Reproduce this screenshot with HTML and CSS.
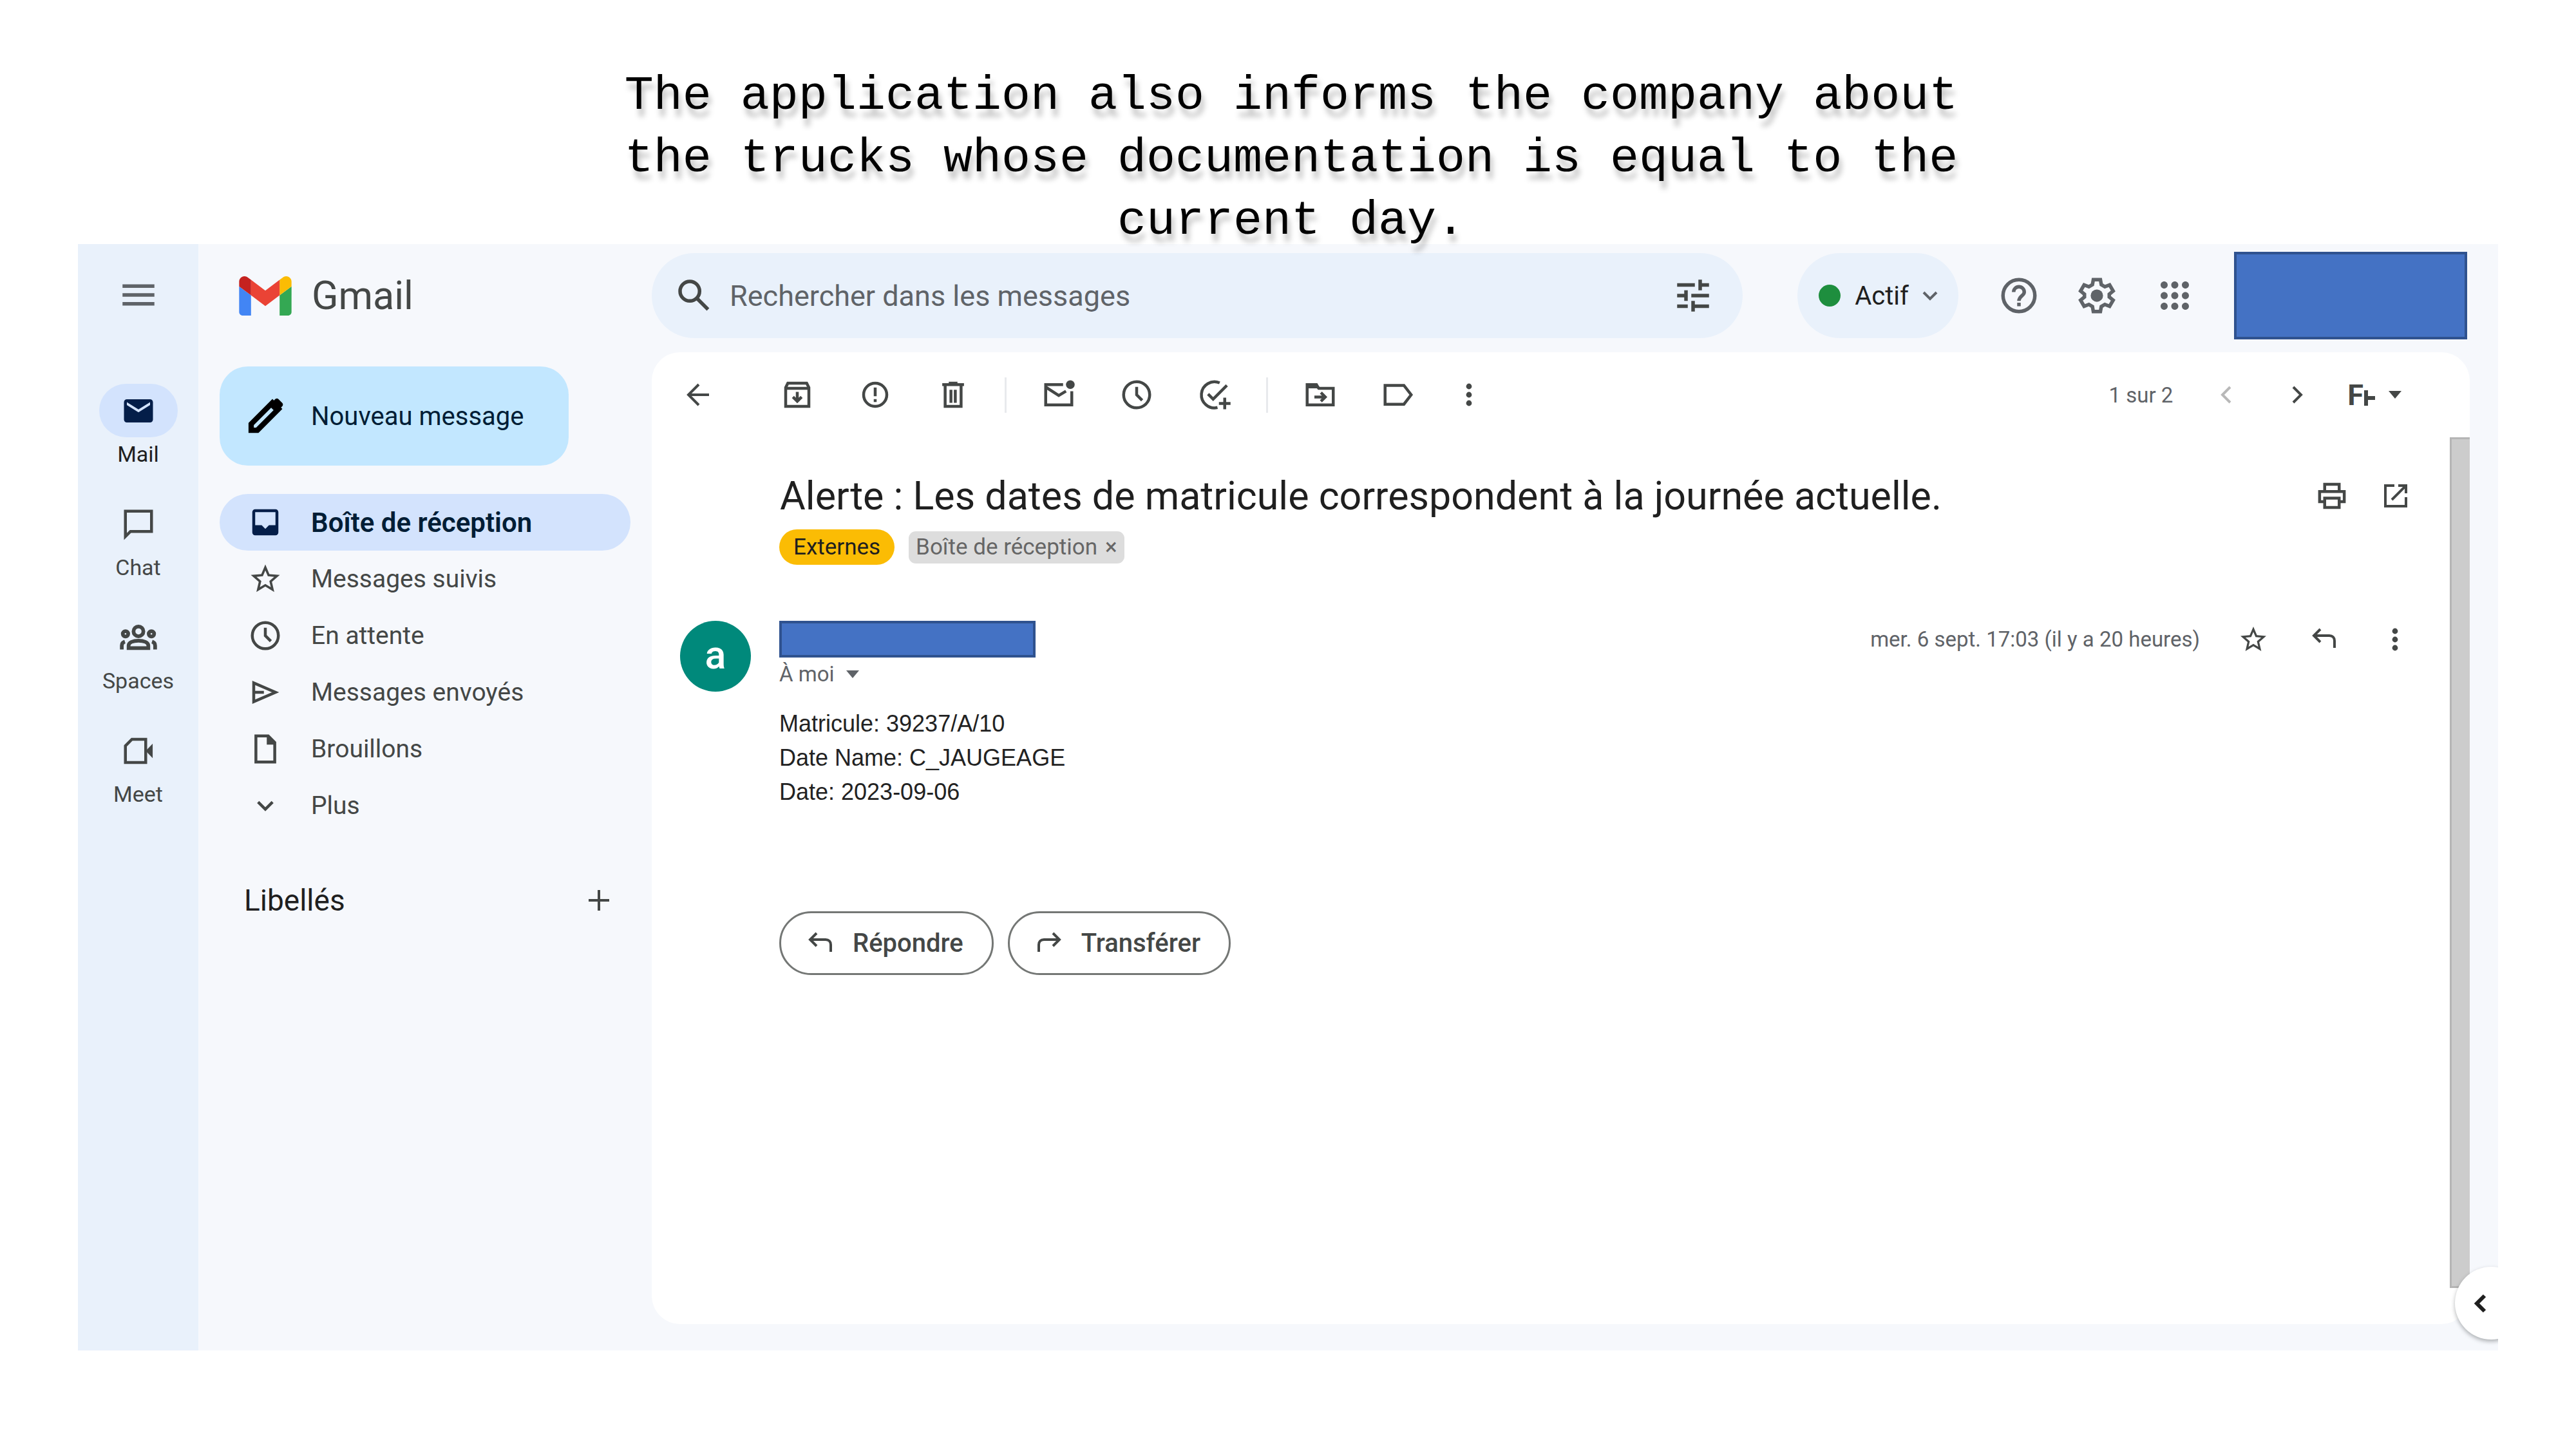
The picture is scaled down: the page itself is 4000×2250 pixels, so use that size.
FILE: index.html
```html
<!DOCTYPE html>
<html lang="fr">
<head>
<meta charset="utf-8">
<meta name="viewport" content="width=device-width, initial-scale=1">
<title>Gmail</title>
<link rel="stylesheet" href="styles.css">
</head>
<body>
<svg class="sprite" aria-hidden="true">
  <symbol id="menu" viewBox="0 0 24 24"><path class="f" d="M3 6h18v2H3zM3 11h18v2H3zM3 16h18v2H3z"/></symbol>
  <symbol id="mail" viewBox="0 0 24 24"><path class="f" d="M20 4H4c-1.100 0-2 .9-2 2v12c0 1.100.9 2 2 2h16c1.100 0 2-.9 2-2V6c0-1.100-.9-2-2-2zm0 4l-8 5-8-5V6l8 5 8-5v2z"/></symbol>
  <symbol id="chat" viewBox="0 0 24 24"><path d="M3 20.500V3h18v14H6.500z"/></symbol>
  <symbol id="spaces" viewBox="0 0 30 24"><g class="bold"><circle cx="15" cy="7" r="4"/><circle cx="4.500" cy="9" r="2.200"/><circle cx="25.500" cy="9" r="2.200"/><path d="M7 20.500v-2c0-2.600 3.600-4 8-4s8 1.400 8 4v2z"/><path d="M1.500 21.700v-3.200c0-1.600 1-2.700 2.500-3.200M28.500 21.700v-3.200c0-1.600-1-2.700-2.500-3.200"/></g></symbol>
  <symbol id="meet" viewBox="0 0 24 24"><path d="M7.500 4H17v16H3V8.500z"/><path class="f" d="M17 12l4.800-5v10z"/></symbol>
  <symbol id="pencil" viewBox="0 0 24 24"><path d="M4 20v-3.500L16 4.500l3.500 3.500L7.500 20z"/><path class="f" d="M14 6l3.500-3.500c.6-.6 1.500-.6 2 0l2 2c.6.500.6 1.400 0 2L18 10z"/></symbol>
  <symbol id="inbox" viewBox="0 0 24 24"><path class="f" fill-rule="evenodd" d="M5 3h14c1.100 0 2 .9 2 2v14c0 1.100-.9 2-2 2H5c-1.100 0-2-.9-2-2V5c0-1.100.9-2 2-2zm0 2v9h4.500l2.500 2.500 2.500-2.500H19V5z"/></symbol>
  <symbol id="star" viewBox="0 0 24 24"><path class="f" fill-rule="evenodd" d="M22 9.240l-7.190-.62L12 2 9.190 8.630 2 9.240l5.460 4.730L5.820 21 12 17.270 18.180 21l-1.630-7.030L22 9.240zM12 15.400l-3.760 2.270 1-4.280-3.320-2.880 4.380-.38L12 6.100l1.710 4.040 4.380.38-3.320 2.880 1 4.280L12 15.400z"/></symbol>
  <symbol id="clock" viewBox="0 0 24 24"><circle cx="12" cy="12" r="9"/><path d="M12 6.500V12l3.800 3.800"/></symbol>
  <symbol id="send" viewBox="0 0 24 24"><path d="M4 5.500v13L19 12z"/><path d="M4 12h7"/></symbol>
  <symbol id="draft" viewBox="0 0 24 24"><path d="M5.500 3H14l4.500 4.500V21h-13z"/><path class="f" d="M13 3l6 6h-6z"/></symbol>
  <symbol id="down" viewBox="0 0 24 24"><path d="M7 9.500l5 5 5-5"/></symbol>
  <symbol id="left" viewBox="0 0 24 24"><path d="M15 6l-6 6 6 6"/></symbol>
  <symbol id="right" viewBox="0 0 24 24"><path d="M9 6l6 6-6 6"/></symbol>
  <symbol id="plus" viewBox="0 0 24 24"><path d="M12 4v16M4 12h16"/></symbol>
  <symbol id="search" viewBox="0 0 24 24"><circle cx="9.500" cy="9.500" r="5.500"/><path d="M13.800 13.800l6 6"/></symbol>
  <symbol id="tune" viewBox="0 0 24 24"><path d="M3 6h10M16 3v6M16 6h5M3 12h5M8 9v6M11 12h10M3 18h6M12 15v6M12 18h9"/></symbol>
  <symbol id="help" viewBox="0 0 24 24"><circle cx="12" cy="12" r="9"/><path d="M9 10a3 3 0 1 1 6 0c0 2-3 2.400-3 5"/><path d="M12 16v2"/></symbol>
  <symbol id="gear" viewBox="0 0 24 24"><path d="M10 3h4l.5 2.800 2 1.200 2.700-1 2 3.400-2.200 1.800v1.600l2.200 1.800-2 3.400-2.700-1-2 1.200L14 21h-4l-.5-2.800-2-1.200-2.700 1-2-3.400L5 12.800v-1.600L2.800 9.400l2-3.400 2.700 1 2-1.200z"/><circle class="f" cx="12" cy="12" r="3.500"/></symbol>
  <symbol id="apps" viewBox="0 0 24 24"><path class="f" d="M6 8c1.100 0 2-.9 2-2s-.9-2-2-2-2 .9-2 2 .9 2 2 2zm6 12c1.100 0 2-.9 2-2s-.9-2-2-2-2 .9-2 2 .9 2 2 2zm-6 0c1.100 0 2-.9 2-2s-.9-2-2-2-2 .9-2 2 .9 2 2 2zm0-6c1.100 0 2-.9 2-2s-.9-2-2-2-2 .9-2 2 .9 2 2 2zm6 0c1.100 0 2-.9 2-2s-.9-2-2-2-2 .9-2 2 .9 2 2 2zm4-8c0 1.100.9 2 2 2s2-.9 2-2-.9-2-2-2-2 .9-2 2zm-4 2c1.100 0 2-.9 2-2s-.9-2-2-2-2 .9-2 2 .9 2 2 2zm6 6c1.100 0 2-.9 2-2s-.9-2-2-2-2 .9-2 2 .9 2 2 2zm0 6c1.100 0 2-.9 2-2s-.9-2-2-2-2 .9-2 2 .9 2 2 2z"/></symbol>
  <symbol id="back" viewBox="0 0 24 24"><path d="M20 12H5M12 4l-8 8 8 8"/></symbol>
  <symbol id="archive" viewBox="0 0 24 24"><path d="M4 7l1.500-3h13L20 7v13H4zM4 7.500h16M12 10v6M9 13.500l3 3 3-3"/></symbol>
  <symbol id="report" viewBox="0 0 24 24"><circle cx="12" cy="12" r="8"/><path d="M12 7v6M12 15v2"/></symbol>
  <symbol id="trash" viewBox="0 0 24 24"><path d="M6.500 6v14h11V6M4.500 5h15M9 4h6M10.500 8.500v9M13.500 8.500v9"/></symbol>
  <symbol id="unread" viewBox="0 0 24 24"><path d="M15 5H3v14h18V9.500M3.500 7l8.500 5.500 5-3"/><circle class="f" cx="20" cy="5" r="3"/></symbol>
  <symbol id="task" viewBox="0 0 24 24"><path d="M15.500 3.800A9 9 0 1 0 14 20.800M7.500 11.500l3.500 3.500L20.500 5.500M19 14v8M15 18h8"/></symbol>
  <symbol id="move" viewBox="0 0 24 24"><path d="M3 19V5h6l2 2.500h10V19z"/><path class="f" d="M3 4h7l2 3.500H3z"/><path d="M8 13.500h7M12.500 10.500l3 3-3 3"/></symbol>
  <symbol id="label" viewBox="0 0 24 24"><path d="M3 5.500h13L21 12l-5 6.500H3z"/></symbol>
  <symbol id="dots" viewBox="0 0 24 24"><circle class="f" cx="12" cy="5.500" r="2.200"/><circle class="f" cx="12" cy="12" r="2.200"/><circle class="f" cx="12" cy="18.500" r="2.200"/></symbol>
  <symbol id="print" viewBox="0 0 24 24"><path d="M7 8V4h10v4M7 16H3.500V9h17v7H17M7 13.500h10V20H7z"/></symbol>
  <symbol id="open" viewBox="0 0 24 24"><path d="M11 4H4v16h16v-7M14 4h6v6M20 4L9 15"/></symbol>
  <symbol id="reply" viewBox="0 0 24 24"><path d="M9 4L4 9l5 5M4 9h12c2.500 0 4 1.500 4 4v5.500"/></symbol>
  <symbol id="forward" viewBox="0 0 24 24"><path d="M15 4l5 5-5 5M20 9H8c-2.500 0-4 1.500-4 4v5.500"/></symbol>
  <symbol id="caret" viewBox="0 0 20 12"><path class="f" d="M0 0h20L10 12z"/></symbol>
  <symbol id="arm" viewBox="0 0 20 24"><path class="thick" d="M4 0v24M4 12h14"/></symbol>
</svg>

<h1 class="caption">The application also informs the company about the trucks whose documentation is equal to the current day.</h1>

<div class="app">
  <nav class="rail" aria-label="Applications">
    <button class="icon-btn menu" aria-label="Menu principal"><svg class="lg"><use href="#menu"/></svg></button>
    <a class="rail-item active" href="#"><span class="pill"><svg class="md"><use href="#mail"/></svg></span>Mail</a>
    <a class="rail-item" href="#"><span class="pill"><svg class="md"><use href="#chat"/></svg></span>Chat</a>
    <a class="rail-item" href="#"><span class="pill"><svg class="wide"><use href="#spaces"/></svg></span>Spaces</a>
    <a class="rail-item" href="#"><span class="pill"><svg class="md"><use href="#meet"/></svg></span>Meet</a>
  </nav>

  <div class="workspace">
    <header class="topbar">
      <a class="brand" href="#">
        <svg class="logo" viewBox="52 42 88 66" aria-hidden="true"><path fill="#4285f4" d="M58 108h14V74L52 59v43c0 3.320 2.690 6 6 6"/><path fill="#34a853" d="M120 108h14c3.320 0 6-2.690 6-6V59l-20 15"/><path fill="#fbbc04" d="M120 48v26l20-15v-8c0-7.420-8.470-11.650-14.400-7.200"/><path fill="#ea4335" d="M72 74V48l24 18 24-18v26L96 92"/><path fill="#c5221f" d="M52 51v8l20 15V48l-5.600-4.200c-5.940-4.450-14.400-.22-14.400 7.200"/></svg>
        Gmail
      </a>
      <form class="search" role="search">
        <button class="icon-btn" type="button" aria-label="Rechercher"><svg class="lg"><use href="#search"/></svg></button>
        <input type="search" placeholder="Rechercher dans les messages" aria-label="Rechercher dans les messages">
        <button class="icon-btn" type="button" aria-label="Options de recherche"><svg class="lg"><use href="#tune"/></svg></button>
      </form>
      <div class="account">
        <button class="status"><span class="dot"></span>Actif<svg class="xs"><use href="#down"/></svg></button>
        <button class="icon-btn tool" aria-label="Assistance"><svg class="lg"><use href="#help"/></svg></button>
        <button class="icon-btn tool" aria-label="Paramètres"><svg class="lg"><use href="#gear"/></svg></button>
        <button class="icon-btn tool" aria-label="Applications Google"><svg class="lg"><use href="#apps"/></svg></button>
        <div class="mask mask-account"></div>
      </div>
    </header>

    <div class="columns">
      <aside class="sidebar">
        <button class="compose"><svg class="lg"><use href="#pencil"/></svg>Nouveau message</button>
        <nav class="folders" aria-label="Dossiers">
          <a class="folder current" href="#"><svg class="md"><use href="#inbox"/></svg>Boîte de réception</a>
          <a class="folder" href="#"><svg class="md"><use href="#star"/></svg>Messages suivis</a>
          <a class="folder" href="#"><svg class="md"><use href="#clock"/></svg>En attente</a>
          <a class="folder" href="#"><svg class="md"><use href="#send"/></svg>Messages envoyés</a>
          <a class="folder" href="#"><svg class="md"><use href="#draft"/></svg>Brouillons</a>
          <a class="folder" href="#"><svg class="md"><use href="#down"/></svg>Plus</a>
        </nav>
        <div class="labels">
          <h2>Libellés</h2>
          <button class="icon-btn" aria-label="Créer un libellé"><svg class="sm"><use href="#plus"/></svg></button>
        </div>
      </aside>

      <main class="card">
        <div class="toolbar">
          <button class="icon-btn tool back" aria-label="Retour"><svg class="sm"><use href="#back"/></svg></button>
          <button class="icon-btn tool" aria-label="Archiver"><svg class="md"><use href="#archive"/></svg></button>
          <button class="icon-btn tool" aria-label="Signaler comme spam"><svg class="md"><use href="#report"/></svg></button>
          <button class="icon-btn tool" aria-label="Supprimer"><svg class="md"><use href="#trash"/></svg></button>
          <span class="divider"></span>
          <button class="icon-btn tool" aria-label="Marquer comme non lu"><svg class="md"><use href="#unread"/></svg></button>
          <button class="icon-btn tool" aria-label="Mettre en attente"><svg class="md"><use href="#clock"/></svg></button>
          <button class="icon-btn tool" aria-label="Ajouter à Tasks"><svg class="md"><use href="#task"/></svg></button>
          <span class="divider"></span>
          <button class="icon-btn tool" aria-label="Déplacer vers"><svg class="md"><use href="#move"/></svg></button>
          <button class="icon-btn tool" aria-label="Ajouter un libellé"><svg class="md"><use href="#label"/></svg></button>
          <button class="icon-btn compact" aria-label="Plus d'options"><svg class="sm"><use href="#dots"/></svg></button>
          <span class="pager">1 sur 2</span>
          <button class="icon-btn action" aria-label="Plus récent" disabled><svg class="sm"><use href="#left"/></svg></button>
          <button class="icon-btn action" aria-label="Plus ancien"><svg class="sm"><use href="#right"/></svg></button>
          <button class="input-tool" aria-label="Outils de saisie"><span>F</span><svg class="arm"><use href="#arm"/></svg><svg class="caret"><use href="#caret"/></svg></button>
        </div>

        <div class="reader">
          <article class="thread">
            <div class="subject">
              <h2>Alerte : Les dates de matricule correspondent à la journée actuelle.</h2>
              <div class="subject-actions">
                <button class="icon-btn compact" aria-label="Tout imprimer"><svg class="md"><use href="#print"/></svg></button>
                <button class="icon-btn compact" aria-label="Nouvelle fenêtre"><svg class="sm"><use href="#open"/></svg></button>
              </div>
            </div>
            <div class="chips">
              <span class="chip external">Externes</span>
              <span class="chip inbox">Boîte de réception <button aria-label="Retirer le libellé">×</button></span>
            </div>
            <div class="message">
              <div class="avatar">a</div>
              <div class="message-main">
                <div class="message-head">
                  <div class="mask mask-sender"></div>
                  <div class="meta">
                    <time datetime="2023-09-06T17:03">mer. 6 sept. 17:03 (il y a 20 heures)</time>
                    <button class="icon-btn action" aria-label="Suivre"><svg class="sm"><use href="#star"/></svg></button>
                    <button class="icon-btn action" aria-label="Répondre"><svg class="sm"><use href="#reply"/></svg></button>
                    <button class="icon-btn action" aria-label="Plus"><svg class="sm"><use href="#dots"/></svg></button>
                  </div>
                </div>
                <button class="recipient">À moi<svg class="caret"><use href="#caret"/></svg></button>
                <div class="body">
                  <p>Matricule: 39237/A/10</p>
                  <p>Date Name: C_JAUGEAGE</p>
                  <p>Date: 2023-09-06</p>
                </div>
                <div class="replies">
                  <button class="outlined"><svg class="sm"><use href="#reply"/></svg>Répondre</button>
                  <button class="outlined"><svg class="sm"><use href="#forward"/></svg>Transférer</button>
                </div>
              </div>
            </div>
          </article>
          <div class="scrollbar"></div>
        </div>
      </main>
    </div>
  </div>
  <button class="panel-toggle" aria-label="Afficher le panneau latéral"><svg class="sm"><use href="#left"/></svg></button>
</div>
</body>
</html>
```
FILE: styles.css
```css
* {
  box-sizing: border-box;
}

body {
  margin: 0;
  min-height: 100vh;
  padding: 101px 121px 153px;
  display: flex;
  flex-direction: column;
  background: #fff;
  color: #444746;
  font-family: Roboto, "Liberation Sans", sans-serif;
  font-size: 39px;
}

h1, h2, p {
  margin: 0;
  font-weight: 400;
}

a {
  color: inherit;
  text-decoration: none;
}

button {
  margin: 0;
  padding: 0;
  border: 0;
  background: none;
  color: inherit;
  font: inherit;
}

.sprite {
  position: absolute;
  width: 0;
  height: 0;
}

svg {
  flex: none;
  display: block;
  fill: none;
  stroke: currentColor;
  stroke-width: 2;
}

.f {
  fill: currentColor;
  stroke: none;
}

.bold {
  stroke-width: 3;
}

.thick {
  stroke-width: 6;
}

.lg { width: 66px; height: 66px; }
.md { width: 54px; height: 54px; }
.sm { width: 48px; height: 48px; }
.xs { width: 48px; height: 48px; margin: 0 -13px; }
.wide { width: 58px; height: 46px; }
.caret { width: 20px; height: 12px; }

/* Caption over the window */

.caption {
  position: relative;
  z-index: 1;
  max-width: 2100px;
  margin: 0 auto -13px;
  padding-left: 10px;
  color: #000;
  font-family: "Courier New", "Liberation Mono", monospace;
  font-size: 75px;
  line-height: 97px;
  text-align: center;
  text-shadow: 4px 12px 8px rgba(0, 0, 0, 0.25);
}

/* Window */

.app {
  position: relative;
  flex: 1;
  display: flex;
  overflow: hidden;
  background: #f6f8fc;
}

.icon-btn {
  display: flex;
  align-items: center;
  justify-content: center;
}

.tool { width: 121px; }
.action { width: 110px; }
.compact { width: 99px; }

.mask {
  background: #4472c4;
  border: 4px solid #2f528f;
}

/* Left rail */

.rail {
  flex: none;
  width: 187px;
  padding-top: 46px;
  display: flex;
  flex-direction: column;
  align-items: center;
  gap: 47px;
  background: #e9f1fb;
}

.menu {
  margin-bottom: 58px;
  color: #5f6368;
}

.rail-item {
  display: flex;
  flex-direction: column;
  align-items: center;
  gap: 6px;
  font-size: 34px;
  line-height: 40px;
}

.pill {
  width: 122px;
  height: 83px;
  display: flex;
  align-items: center;
  justify-content: center;
  border-radius: 44px;
}

.rail-item.active {
  color: #1f1f1f;
}

.active .pill {
  background: #d3e3fd;
  color: #041e49;
}

/* Top bar */

.workspace {
  flex: 1;
  min-width: 0;
  display: flex;
  flex-direction: column;
}

.topbar {
  padding: 14px 48px 22px 0;
  display: flex;
  align-items: stretch;
}

.brand {
  flex: none;
  width: 704px;
  padding-left: 63px;
  display: flex;
  align-items: center;
  gap: 31px;
  font-size: 61px;
}

.logo {
  width: 82px;
  height: 61px;
  stroke: none;
}

.search {
  flex: 1;
  max-width: 1694px;
  height: 132px;
  padding: 0 44px 0 33px;
  display: flex;
  align-items: center;
  gap: 22px;
  border-radius: 66px;
  background: #e9f1fb;
}

.search input {
  flex: 1;
  min-width: 0;
  padding: 0;
  border: 0;
  outline: 0;
  background: none;
  font: inherit;
  font-size: 45px;
}

.search input::placeholder {
  color: #5f6368;
  opacity: 1;
}

.account {
  flex: none;
  margin-left: auto;
  padding-left: 48px;
  display: flex;
  align-items: center;
  color: #5f6368;
}

.status {
  height: 132px;
  margin-right: 33px;
  padding: 0 33px;
  display: flex;
  align-items: center;
  gap: 22px;
  border-radius: 66px;
  background: #e9f1fb;
  color: #1f1f1f;
  font-size: 40px;
}

.status svg {
  color: #5f6368;
}

.dot {
  width: 34px;
  height: 34px;
  border-radius: 50%;
  background: #1e8e3e;
}

.mask-account {
  width: 362px;
  height: 136px;
  margin: -2px 0 -2px 32px;
}

/* Sidebar */

.columns {
  flex: 1;
  display: flex;
}

.sidebar {
  flex: none;
  width: 704px;
  padding: 22px 33px;
}

.compose {
  width: 542px;
  height: 154px;
  margin-bottom: 44px;
  padding-left: 38px;
  display: flex;
  align-items: center;
  gap: 38px;
  border-radius: 44px;
  background: #c2e7ff;
  color: #001d35;
  font-size: 40px;
}

.compose svg {
  color: #000;
  stroke-width: 3;
}

.folder {
  height: 88px;
  padding-left: 44px;
  display: flex;
  align-items: center;
  gap: 44px;
  border-radius: 44px;
}

.folder.current {
  background: #d3e3fd;
  color: #001d35;
  font-size: 42px;
  font-weight: 600;
}

.current svg {
  color: #041e49;
}

.labels {
  height: 88px;
  margin-top: 59px;
  padding: 0 25px 0 38px;
  display: flex;
  align-items: center;
  justify-content: space-between;
}

.labels h2 {
  color: #1f1f1f;
  font-size: 46px;
}

/* Message card */

.card {
  flex: 1;
  min-width: 0;
  margin: 0 44px 41px 0;
  display: flex;
  flex-direction: column;
  border-radius: 44px;
  background: #fff;
}

.toolbar {
  height: 132px;
  padding: 0 106px 0 12px;
  display: flex;
  align-items: center;
}

.back {
  margin-right: 32px;
}

.divider {
  width: 3px;
  height: 55px;
  margin: 0 20px;
  background: #e8eaed;
}

.pager {
  margin-left: auto;
  margin-right: 28px;
  color: #5f6368;
  font-size: 33px;
}

.icon-btn:disabled {
  color: #b8b8b8;
}

.input-tool {
  padding-left: 23px;
  display: flex;
  align-items: center;
  font-size: 45px;
  font-weight: 700;
}

.arm {
  width: 20px;
  height: 24px;
  margin: 10px 19px 0 0;
}

.reader {
  flex: 1;
  display: flex;
}

.thread {
  flex: 1;
  min-width: 0;
  padding: 55px 30px 56px 44px;
}

.subject {
  padding-left: 155px;
  display: flex;
  align-items: center;
  justify-content: space-between;
}

.subject h2 {
  color: #1f1f1f;
  font-size: 61px;
  line-height: 72px;
}

.subject-actions {
  padding-right: 5px;
  display: flex;
}

.chips {
  margin: 16px 0 87px;
  padding-left: 154px;
  display: flex;
  align-items: center;
  gap: 22px;
  font-size: 35px;
}

.chip {
  display: flex;
  align-items: center;
}

.chip.external {
  height: 55px;
  padding: 0 22px;
  border-radius: 28px;
  background: #fbbc04;
  color: #1f1f1f;
}

.chip.inbox {
  height: 50px;
  padding: 0 11px;
  gap: 12px;
  border-radius: 11px;
  background: #ddd;
  color: #666;
}

.message {
  display: flex;
  align-items: flex-start;
  gap: 44px;
}

.avatar {
  flex: none;
  width: 110px;
  height: 110px;
  border-radius: 50%;
  background: #00897b;
  color: #fff;
  font-size: 61px;
  font-weight: 500;
  line-height: 106px;
  text-align: center;
}

.message-main {
  flex: 1;
  min-width: 0;
}

.message-head {
  height: 57px;
  display: flex;
  align-items: center;
  justify-content: space-between;
}

.mask-sender {
  width: 398px;
  height: 57px;
}

.meta {
  display: flex;
  align-items: center;
  color: #444746;
}

.meta time {
  margin-right: 28px;
  color: #5f6368;
  font-size: 33px;
}

.recipient {
  margin-top: 6px;
  display: flex;
  align-items: center;
  gap: 18px;
  color: #5f6368;
  font-size: 33px;
  line-height: 40px;
}

.body {
  margin: 30px 0 159px;
  color: #222;
  font-family: Arial, "Liberation Sans", sans-serif;
  font-size: 36px;
  line-height: 53px;
}

.replies {
  display: flex;
  gap: 22px;
}

.outlined {
  height: 99px;
  padding: 0 44px 0 37px;
  display: flex;
  align-items: center;
  gap: 26px;
  border: 3px solid #747775;
  border-radius: 50px;
  font-size: 40px;
  font-weight: 500;
}

.scrollbar {
  flex: none;
  width: 31px;
  margin-bottom: 56px;
  border: 3px solid #b5b5b5;
  border-right: 0;
  background: #ccc;
}

/* Side panel toggle, cut off by the window's edge */

.panel-toggle {
  position: absolute;
  right: -46px;
  bottom: 17px;
  width: 113px;
  height: 113px;
  padding-left: 16px;
  border-radius: 50%;
  background: #fff;
  box-shadow: 0 3px 6px rgba(60, 64, 67, 0.4);
  color: #1f1f1f;
}

.panel-toggle svg {
  stroke-width: 3;
}
```
